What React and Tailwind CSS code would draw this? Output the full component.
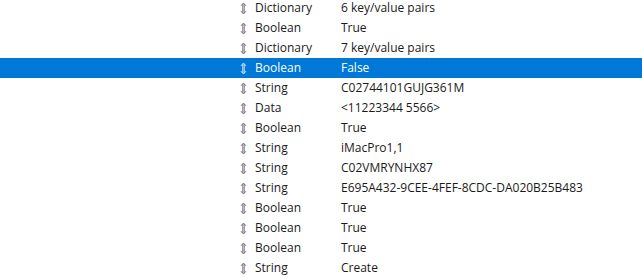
import React from 'react'

const rows = [
  ['Dictionary', '6 key/value pairs'],
  ['Boolean', 'True'],
  ['Dictionary', '7 key/value pairs'],
  ['Boolean', 'False'],
  ['String', 'C02744101GUJG361M'],
  ['Data', '<11223344 5566>'],
  ['Boolean', 'True'],
  ['String', 'iMacPro1,1'],
  ['String', 'C02VMRYNHX87'],
  ['String', 'E695A432-9CEE-4FEF-8CDC-DA020B25B483'],
  ['Boolean', 'True'],
  ['Boolean', 'True'],
  ['Boolean', 'True'],
  ['String', 'Create'],
]

const SELECTED = 3

// small up/down stepper arrow in front of each type
const UpDown = ({ light }) => (
  <svg width="7" height="13" viewBox="0 0 7 13" className="block">
    <path
      d="M2.8 2 L2.8 11 M4.2 2 L4.2 11 M1 3.8 L3.5 1 L6 3.8 M1 9.2 L3.5 12 L6 9.2"
      fill="none"
      stroke={light ? '#d8e6f5' : '#7a6f80'}
      strokeWidth="1"
    />
  </svg>
)

const App = () => {
  return (
    <div
      className="w-[642px] h-[277px] overflow-hidden bg-white text-[12px] text-[#1a1a1a]"
      style={{ fontFamily: '"Open Sans", "Noto Sans CJK KR", sans-serif' }}
    >
      <div className="-mt-[2px]">
        {rows.map(([type, value], i) => {
          const sel = i === SELECTED
          return (
            <div
              key={i}
              className={`flex items-center h-5 ${sel ? 'bg-[#0078d7] text-white' : ''}`}
            >
              <div className="w-[240px]" />
              <div className="w-[15px] flex items-center">
                <UpDown light={sel} />
              </div>
              <div className="w-[86px] leading-5">{type}</div>
              <div className="leading-5">{value}</div>
            </div>
          )
        })}
      </div>
    </div>
  )
}

export default App
